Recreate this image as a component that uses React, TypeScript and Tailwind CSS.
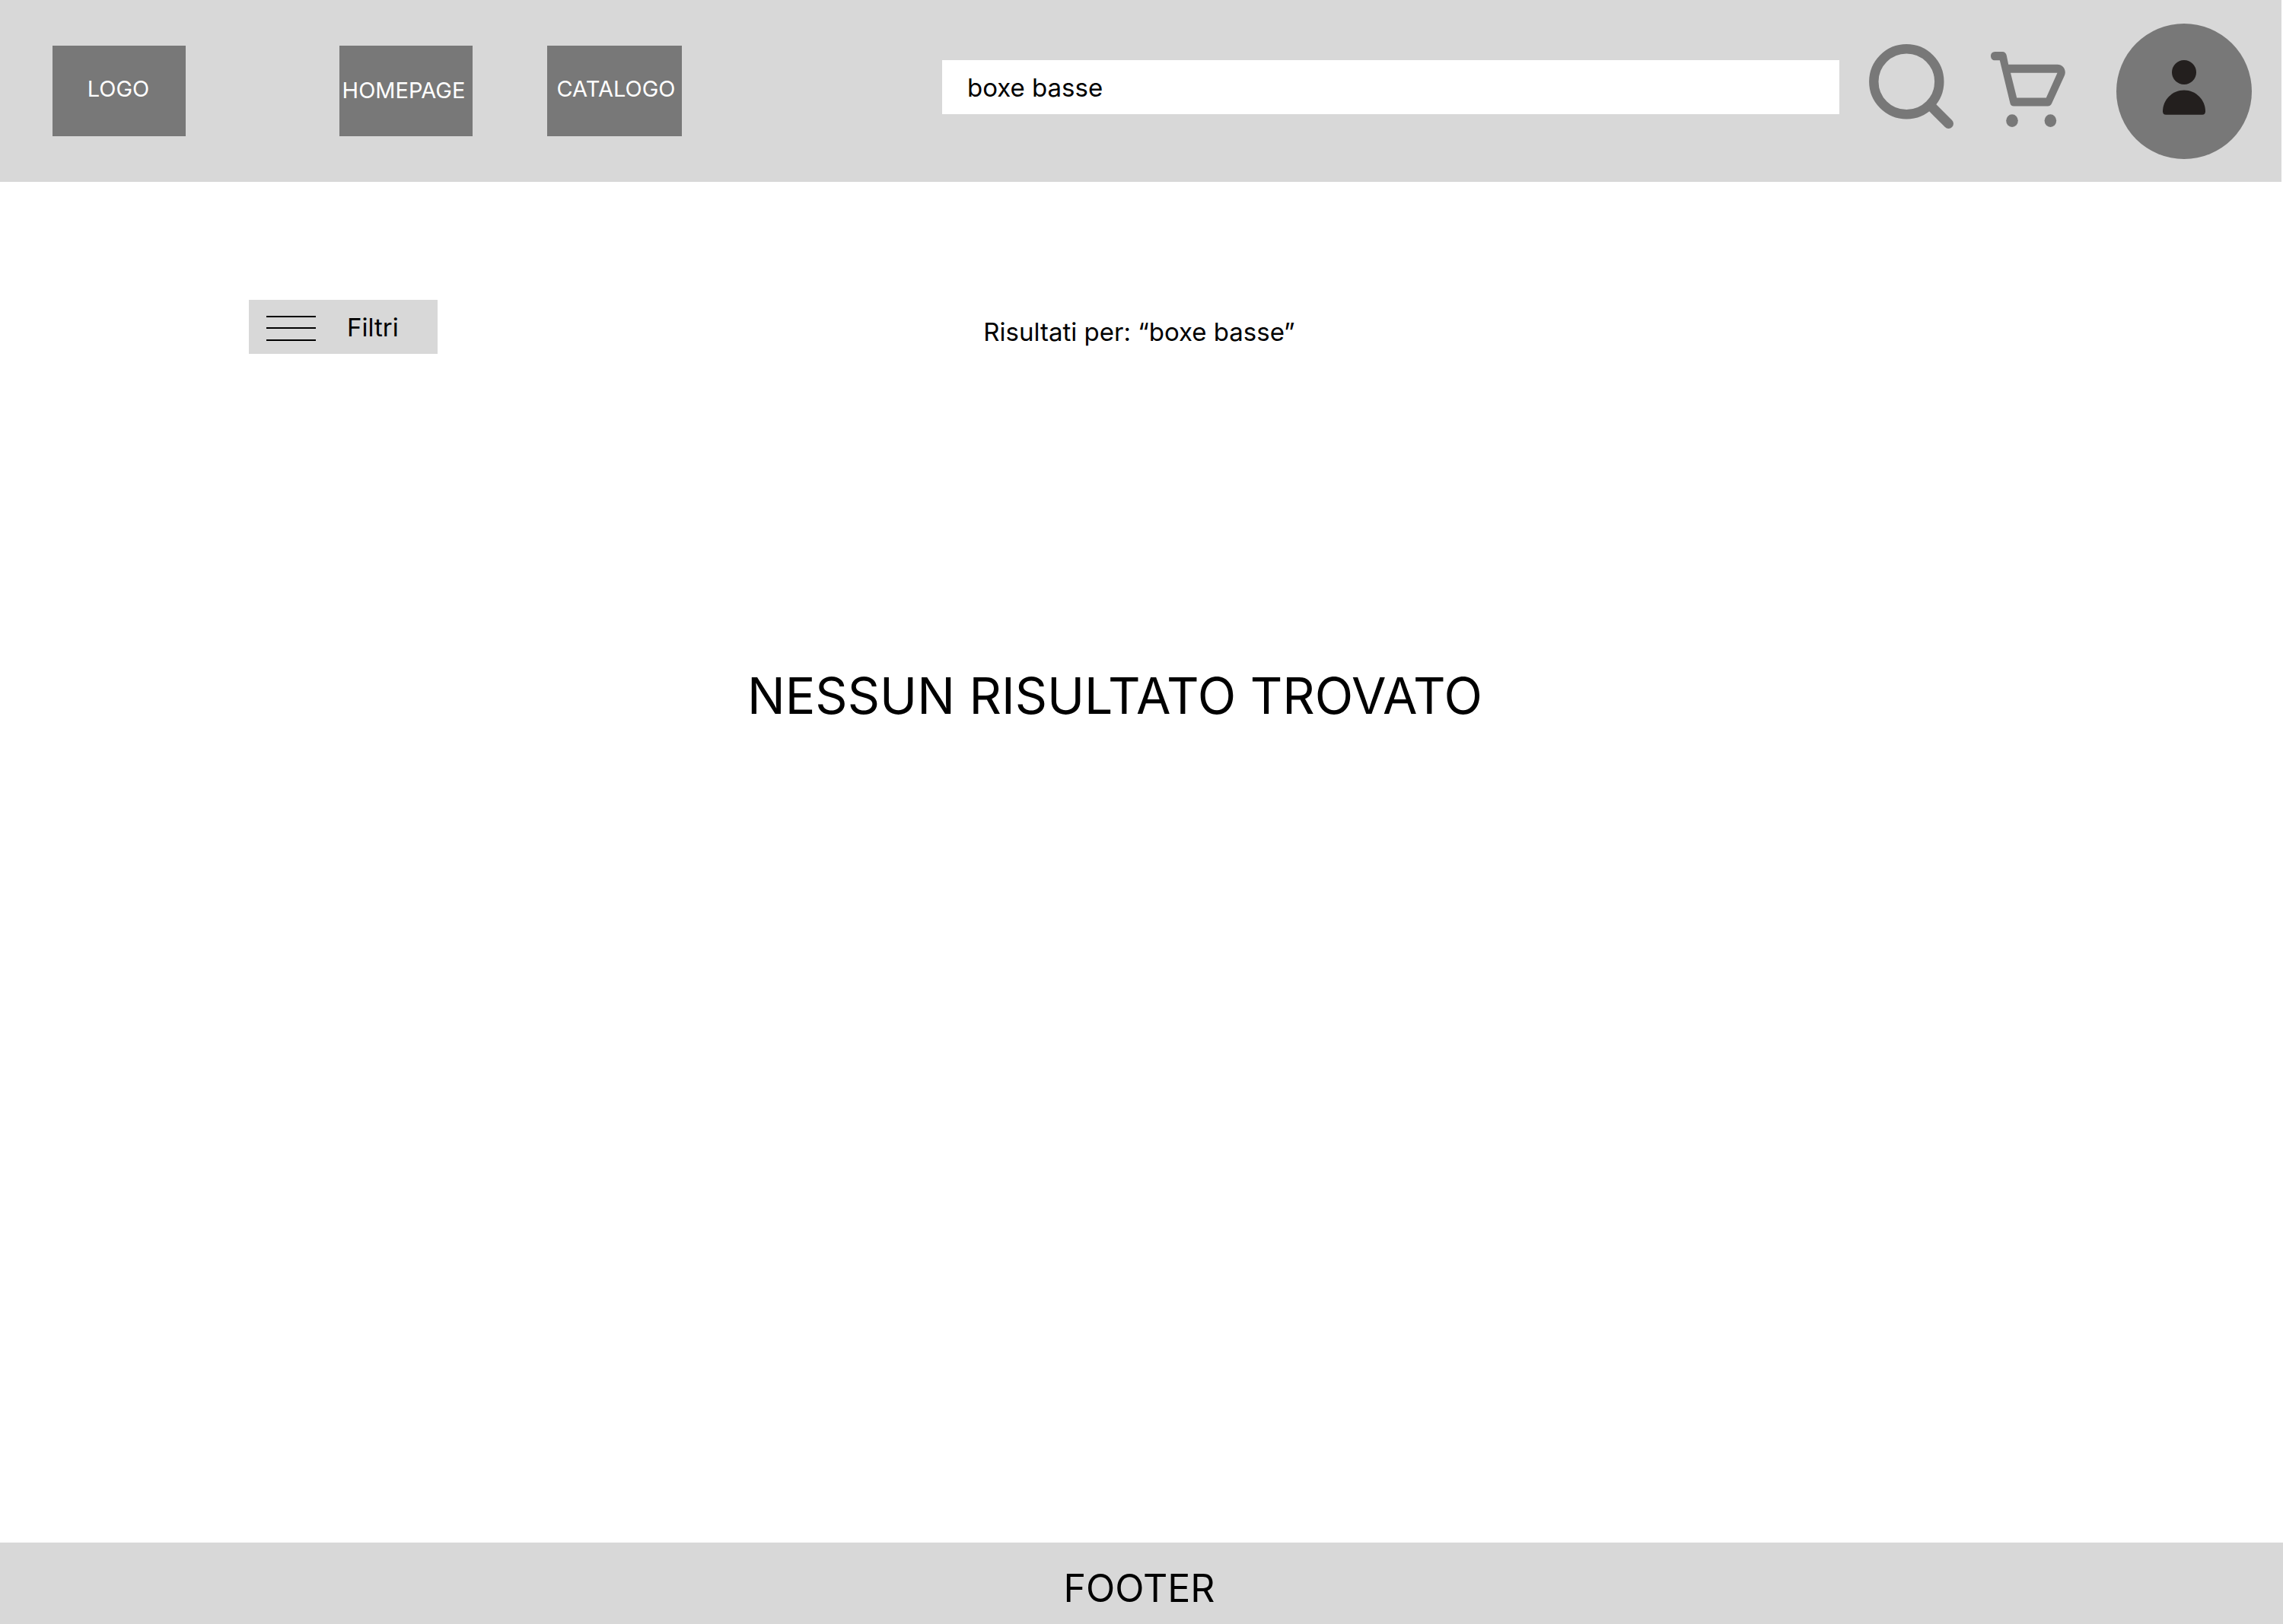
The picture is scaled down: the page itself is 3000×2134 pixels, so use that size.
import React from "react";

function SearchIcon() {
  return (
    <svg viewBox="0 0 111 111" className="h-[111px] w-[111px]" fill="none" stroke="#787878" aria-hidden="true">
      <circle cx="49.3" cy="49.3" r="43" strokeWidth="12.4" />
      <path d="M83 83L104.5 104.5" strokeWidth="13" strokeLinecap="round" />
    </svg>
  );
}

function CartIcon() {
  return (
    <svg viewBox="0 0 98 100" className="h-[100px] w-[98px]" fill="#787878" aria-hidden="true">
      <path
        d="M5.5 0H15C18.5 0 20.3 2 20.8 5L23.2 16.8H87.5C95 16.8 100 24.5 96.8 31.5L80.3 67.5C79.2 70 77.5 71.6 74.8 71.6H30.5C27.5 71.6 25.9 70 25.4 67.5L11.8 11.3H5.5C-1.8 11.3 -1.8 0 5.5 0ZM26 27.8L34.2 60.4H72.8L87.5 27.8Z"
        fillRule="evenodd"
      />
      <ellipse cx="28" cy="90.6" rx="7.8" ry="8.4" />
      <ellipse cx="78.4" cy="90.6" rx="7.8" ry="8.4" />
    </svg>
  );
}

function UserIcon() {
  return (
    <svg viewBox="0 0 56 72" className="h-[72px] w-[56px]" fill="#231f1e" aria-hidden="true">
      <circle cx="28" cy="16" r="16" />
      <path d="M28 39.5C43.5 39.5 56 52 56 67.5C56 70.2 54.4 71.8 51.8 71.8H4.2C1.6 71.8 0 70.2 0 67.5C0 52 12.5 39.5 28 39.5Z" />
    </svg>
  );
}

export default function App() {
  return (
    <div className="flex min-h-screen flex-col bg-white font-['Inter',sans-serif] text-black">
      <header className="mr-[2px] flex h-[239px] items-center bg-[#d8d8d8] pr-[39px] pl-[69px]">
        <a
          href="#logo"
          className="flex h-[119px] w-[175px] shrink-0 items-center justify-center bg-[#787878] pr-[2px] pb-[6px] text-[29px] text-white"
        >
          LOGO
        </a>
        <nav className="ml-[202px] flex shrink-0 gap-[98px] text-[29px] text-white">
          <a href="#homepage" className="flex h-[119px] w-[175px] items-center justify-center bg-[#787878] pr-[6px] pb-[2px]">
            HOMEPAGE
          </a>
          <a href="#catalogo" className="flex h-[119px] w-[177px] items-center justify-center bg-[#787878] pb-[6px] pl-[4px]">
            CATALOGO
          </a>
        </nav>
        <form role="search" onSubmit={(e) => e.preventDefault()} className="ml-[342px] flex flex-1 items-center gap-[39px] pb-[10px]">
          <input
            type="text"
            aria-label="Cerca"
            defaultValue="boxe basse"
            className="h-[71px] min-w-0 flex-1 bg-white px-[33px] text-[33px] outline-none"
          />
          <button type="submit" aria-label="Cerca" className="shrink-0 pb-[2px]">
            <SearchIcon />
          </button>
        </form>
        <button type="button" aria-label="Carrello" className="ml-[49px] shrink-0 pb-[4px]">
          <CartIcon />
        </button>
        <button
          type="button"
          aria-label="Profilo"
          className="ml-[67px] flex h-[178px] w-[178px] shrink-0 items-center justify-center rounded-full bg-[#787878] pb-[10px]"
        >
          <UserIcon />
        </button>
      </header>

      <main className="flex flex-1 flex-col pt-[155px]">
        <div className="grid grid-cols-[1fr_auto_1fr] items-center pr-[6px]">
          <button type="button" className="ml-[327px] flex h-[71px] w-[248px] items-center bg-[#d8d8d8] pt-[2px] pl-[23px] text-[33px]">
            <span className="mr-[41px] flex w-[65px] flex-col pt-[2px]">
              <span className="mb-[13px] h-[2px] bg-black" />
              <span className="mb-[14px] h-[2px] bg-black" />
              <span className="h-[2px] bg-black" />
            </span>
            Filtri
          </button>
          <p className="pt-[14px] text-[33px]">Risultati per: “boxe basse”</p>
        </div>
        <h1 className="mt-[409px] pr-[70px] text-center text-[66px] leading-[80px]">NESSUN RISULTATO TROVATO</h1>
      </main>

      <footer className="flex h-[107px] items-center justify-center bg-[#d8d8d8] pt-[14px] pr-[6px] text-[50px]">FOOTER</footer>
    </div>
  );
}
